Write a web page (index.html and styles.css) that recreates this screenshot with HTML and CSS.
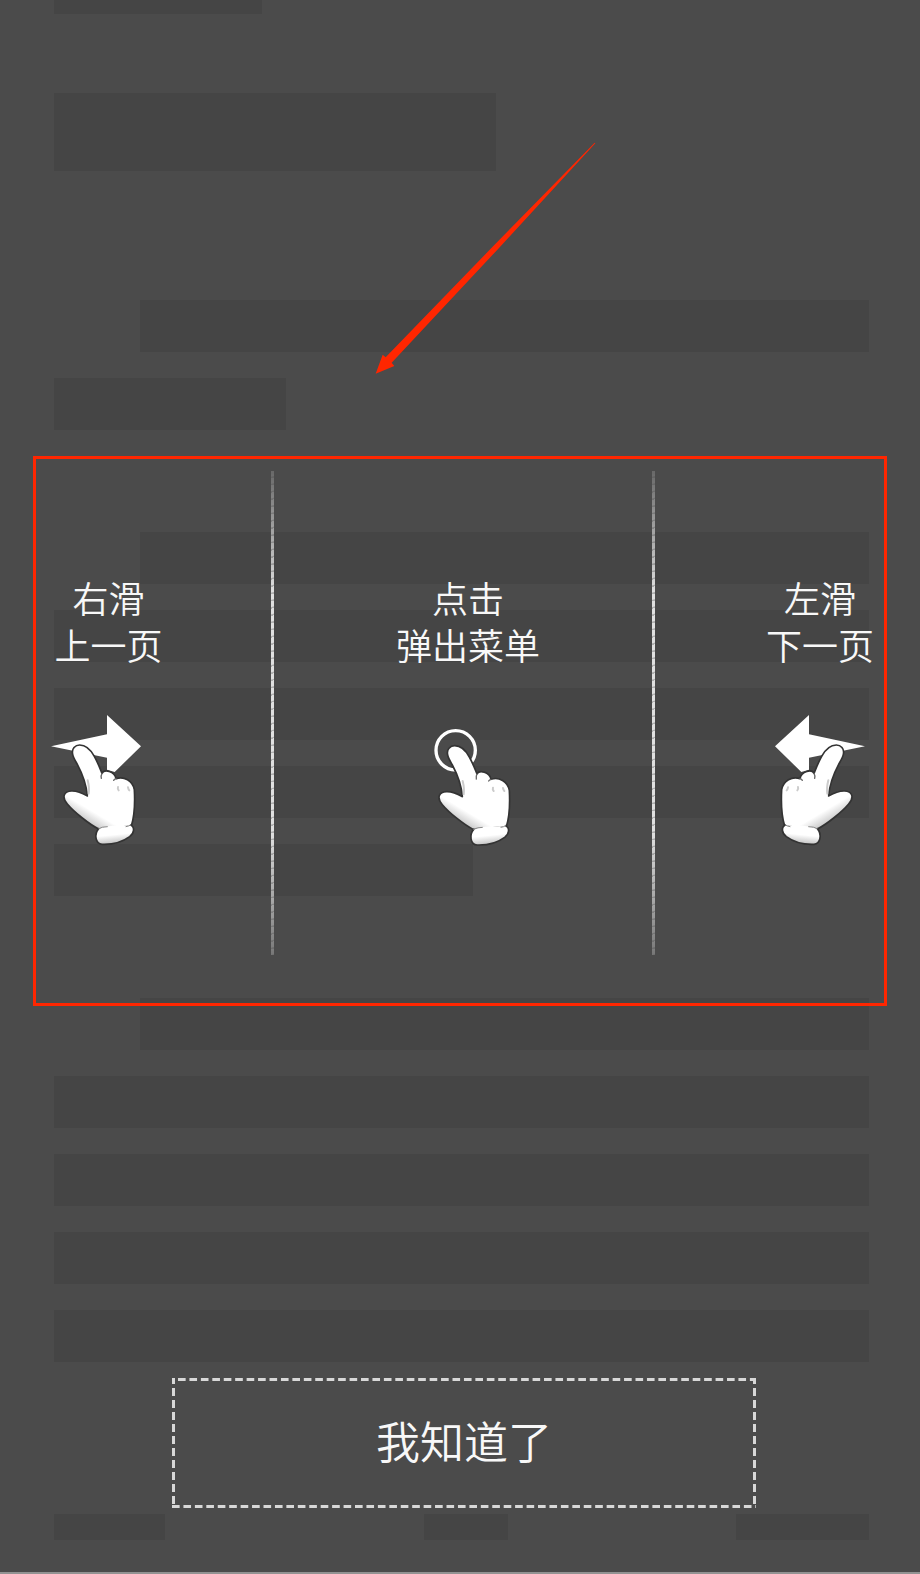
FILE: index.html
```html
<!DOCTYPE html>
<html lang="zh-CN">
<head>
    <meta charset="UTF-8">
    <meta name="viewport" content="width=device-width, initial-scale=1.0">
    <title>阅读引导</title>
    <link rel="stylesheet" href="styles.css">
</head>
<body>
    <div class="reader">
        <!-- Placeholder page under the guide -->
        <div class="skeleton" aria-hidden="true">
            <div class="bar crumb"></div>
            <div class="bar title"></div>
            <div class="paragraph">
                <div class="bar indent"></div>
                <div class="bar short"></div>
            </div>
            <div class="paragraph">
                <div class="bar indent"></div>
                <div class="bar"></div>
                <div class="bar"></div>
                <div class="bar"></div>
                <div class="bar half"></div>
            </div>
            <div class="paragraph">
                <div class="bar indent"></div>
                <div class="bar"></div>
                <div class="bar"></div>
                <div class="bar"></div>
                <div class="bar"></div>
            </div>
            <div class="page-footer">
                <div class="bar foot-left"></div>
                <div class="bar foot-center"></div>
                <div class="bar foot-right"></div>
            </div>
        </div>

        <!-- Gesture guide -->
        <div class="guide">
            <div class="gestures">
                <div class="gesture prev">
                    <p>右滑<br>上一页</p>
                    <svg width="117" height="135" viewBox="60 460 351 405" aria-hidden="true">
                        <defs>
                            <linearGradient id="shade" x1="0.4" y1="0.6" x2="0.25" y2="0.9">
                                <stop offset="0.5" stop-color="#fff"/>
                                <stop offset="1" stop-color="#c4c4c4"/>
                            </linearGradient>
                            <linearGradient id="cuff" x1="0.4" y1="0" x2="0.6" y2="1">
                                <stop offset="0.5" stop-color="#fff"/>
                                <stop offset="1" stop-color="#bbb"/>
                            </linearGradient>
                            <g id="hand" stroke-linejoin="round" stroke-linecap="round">
                                <path fill="url(#shade)" stroke="#333" stroke-width="5" d="M128 584C124 567 136 556 149 556C168 556 182 570 193 590C204 610 211 629 216 641C222 628 254 634 258 657C282 649 308 663 313 690C315 728 314 768 304 799L206 808C178 794 132 757 112 733C94 712 102 695 124 694C145 693 160 702 172 709C170 682 157 642 142 614C136 603 130 594 128 584Z"/>
                                <path fill="url(#cuff)" d="M206 807C234 795 281 800 302 796C315 803 313 820 299 831C276 848 244 855 216 854C196 853 192 823 206 807Z"/>
                                <path fill="none" stroke="#333" stroke-width="5" d="M206 807C192 823 196 853 216 854C244 855 276 848 299 831C313 820 315 803 302 796"/>
                                <path fill="none" stroke="#888" stroke-width="3" d="M206 807Q216 801 232 801M288 801Q296 800 302 796"/>
                                <path fill="none" stroke="#666" stroke-width="4" d="M216 641Q212 648 214 656M258 657Q253 658 251 662"/>
                                <path fill="none" stroke="#ccc" stroke-width="6" d="M176 702C178 690 176 674 173 662M264 682Q262 688 266 692M294 683Q295 689 298 692"/>
                            </g>
                        </defs>
                        <path fill="#fff" d="M63 560L231 524V466L333 560L254 637L231 630V594Z"/>
                        <use href="#hand"/>
                    </svg>
                </div>
                <div class="divider"></div>
                <div class="gesture menu">
                    <p>点击<br>弹出菜单</p>
                    <svg width="92" height="135" viewBox="126 460 276 405" aria-hidden="true">
                        <circle cx="227" cy="572" r="59" fill="none" stroke="#fff" stroke-width="10"/>
                        <use href="#hand" x="75" y="2"/>
                    </svg>
                </div>
                <div class="divider"></div>
                <div class="gesture next">
                    <p>左滑<br>下一页</p>
                    <svg width="92" height="135" viewBox="103 460 276 405" aria-hidden="true">
                        <g transform="translate(439 0) scale(-1 1)">
                            <path fill="#fff" d="M63 560L231 524V466L333 560L254 637L231 630V594Z"/>
                            <use href="#hand"/>
                        </g>
                    </svg>
                </div>
            </div>
            <button type="button" class="confirm">我知道了</button>
        </div>

        <!-- Red pointer to the gesture area -->
        <svg class="pointer" width="250" height="260" viewBox="0 0 750 780" aria-hidden="true">
            <path fill="#ff2600" d="M706 40L704 38L400 348L77 682L68 674L47 731L103 708L95 698L415 356Z"/>
        </svg>
    </div>
</body>
</html>
```
FILE: styles.css
```css
* {
    box-sizing: border-box;
}

body {
    margin: 0;
    background: #4b4b4b;
    color: #f8f8f8;
    font-family: "Noto Sans CJK SC", "Noto Sans", sans-serif;
}

.reader {
    position: relative;
    min-height: 100vh;
    border-bottom: 2px solid #929292;
}

/* Placeholder page */
.skeleton {
    padding: 0 51px 32px 54px;
}

.bar {
    height: 52px;
    background: #454545;
}

.crumb {
    width: 208px;
    height: 14px;
}

.title {
    width: 442px;
    height: 78px;
    margin-top: 79px;
    margin-bottom: 129px;
}

.paragraph {
    display: flex;
    flex-direction: column;
    gap: 26px;
    margin-bottom: 102px;
}

.indent {
    margin-left: 86px;
}

.short {
    width: 232px;
}

.half {
    width: 419px;
}

.page-footer {
    display: grid;
    grid-template-columns: 370fr 312fr 133fr;
    margin-top: 152px;
}

.page-footer .bar {
    height: 26px;
}

.foot-left {
    width: 111px;
}

.foot-center {
    width: 84px;
}

.paragraph:nth-last-child(2) {
    margin-bottom: 0;
}

/* Guide over the page */
.guide {
    position: absolute;
    inset: 0;
    display: flex;
    flex-direction: column;
    padding: 456px 33px 64px;
}

.gestures {
    display: grid;
    grid-template-columns: 235fr 3px 378fr 3px 229fr;
    border: 3px solid #ff2600;
}

.gesture {
    display: flex;
    flex-direction: column;
    align-items: center;
    gap: 45px;
    padding-top: 115px;
}

.gesture p {
    margin: 0;
    font-size: 36px;
    font-weight: 350;
    line-height: 47px;
    text-align: center;
    white-space: nowrap;
}

.prev {
    justify-self: start;
    padding-left: 14px;
}

.menu {
    padding-left: 10px;
}

.next {
    justify-self: end;
    padding-right: 10px;
}

.divider {
    min-height: 484px;
    margin: 12px 0 48px;
    background: repeating-linear-gradient(165deg, #e0e0e0 0 5px, #b0b0b0 6px 7px);
    -webkit-mask-image: linear-gradient(rgba(0, 0, 0, 0.2), #000 25%, #000 75%, rgba(0, 0, 0, 0.3));
    mask-image: linear-gradient(rgba(0, 0, 0, 0.2), #000 25%, #000 75%, rgba(0, 0, 0, 0.3));
}

/* Dashed frame, dashes are longer than a dashed border draws */
.confirm {
    height: 130px;
    margin: auto 131px 0 139px;
    padding: 0 0 6px;
    border: none;
    background:
        linear-gradient(90deg, #d8d8d8 68%, transparent 0) 6px 0 / calc(100% / 51) 3px repeat-x,
        linear-gradient(90deg, #d8d8d8 68%, transparent 0) 0 100% / calc(100% / 51) 3px repeat-x,
        linear-gradient(#d8d8d8 68%, transparent 0) 0 10px / 3px 12px repeat-y,
        linear-gradient(#d8d8d8 68%, transparent 0) 100% 10px / 3px 12px repeat-y;
    color: inherit;
    font-family: inherit;
    font-size: 44px;
    font-weight: 350;
    cursor: pointer;
}

.pointer {
    position: absolute;
    top: 130px;
    left: 360px;
}
```
